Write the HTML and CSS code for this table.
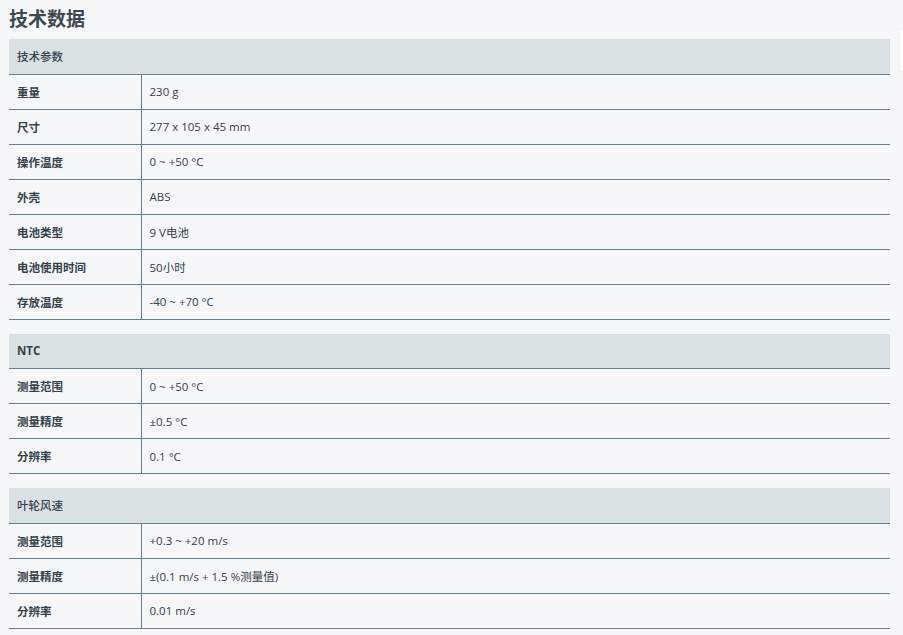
FILE: index.html
```html
<!DOCTYPE html>
<html lang="zh-CN">
<head>
<meta charset="utf-8">
<link rel="stylesheet" href="styles.css">
</head>
<body>
<div class="page">
  <h1 class="title">技术数据</h1>
  <table class="spec">
    <colgroup><col class="ck"><col class="cv"></colgroup>
    <thead><tr><th colspan="2">技术参数</th></tr></thead>
    <tbody>
      <tr><td class="k">重量</td><td class="v">230 g</td></tr>
      <tr><td class="k">尺寸</td><td class="v">277 x 105 x 45 mm</td></tr>
      <tr><td class="k">操作温度</td><td class="v">0 ~ +50 °C</td></tr>
      <tr><td class="k">外壳</td><td class="v">ABS</td></tr>
      <tr><td class="k">电池类型</td><td class="v">9 V电池</td></tr>
      <tr><td class="k">电池使用时间</td><td class="v">50小时</td></tr>
      <tr><td class="k">存放温度</td><td class="v">-40 ~ +70 °C</td></tr>
    </tbody>
  </table>
  <table class="spec">
    <colgroup><col class="ck"><col class="cv"></colgroup>
    <thead><tr><th colspan="2" class="latin">NTC</th></tr></thead>
    <tbody>
      <tr><td class="k">测量范围</td><td class="v">0 ~ +50 °C</td></tr>
      <tr><td class="k">测量精度</td><td class="v">±0.5 °C</td></tr>
      <tr><td class="k">分辨率</td><td class="v">0.1 °C</td></tr>
    </tbody>
  </table>
  <table class="spec">
    <colgroup><col class="ck"><col class="cv"></colgroup>
    <thead><tr><th colspan="2">叶轮风速</th></tr></thead>
    <tbody>
      <tr><td class="k">测量范围</td><td class="v">+0.3 ~ +20 m/s</td></tr>
      <tr><td class="k">测量精度</td><td class="v">±(0.1 m/s + 1.5 %测量值)</td></tr>
      <tr><td class="k">分辨率</td><td class="v">0.01 m/s</td></tr>
    </tbody>
  </table>
</div>
<div class="edge"></div>
</body>
</html>
```
FILE: styles.css
```css
html, body {
  margin: 0;
  padding: 0;
  background: #f5f7f9;
}
body {
  font-family: "Open Sans", "Noto Sans CJK SC", sans-serif;
  color: #36424b;
  font-size: 11.5px;
}
.page {
  padding: 0 13px 0 9px;
}
.title {
  margin: 0;
  height: 39px;
  line-height: 38px;
  font-size: 19px;
  font-weight: 700;
  color: #3d4850;
}
.spec {
  width: 881px;
  border-collapse: collapse;
  margin-bottom: 14px;
  table-layout: fixed;
}
.spec .ck {
  width: 132px;
}
.spec th {
  background: #d9e1e4;
  height: 35px;
  padding: 0 0 0 8px;
  text-align: left;
  font-weight: 500;
  border-bottom: 1px solid #62808f;
  box-sizing: border-box;
}
.spec th.latin {
  font-weight: 700;
}
.spec td {
  height: 35px;
  padding: 0 0 0 8px;
  border-bottom: 1px solid #62808f;
  box-sizing: border-box;
}
.spec td.k {
  font-weight: 700;
  border-right: 1px solid #62808f;
}
.spec td.v {
  font-weight: 400;
}
.edge {
  position: absolute;
  left: 900px;
  top: 30px;
  width: 3px;
  height: 41px;
  background: #ffffff;
  box-shadow: 0 0 2px rgba(0,0,0,0.08);
}
```
